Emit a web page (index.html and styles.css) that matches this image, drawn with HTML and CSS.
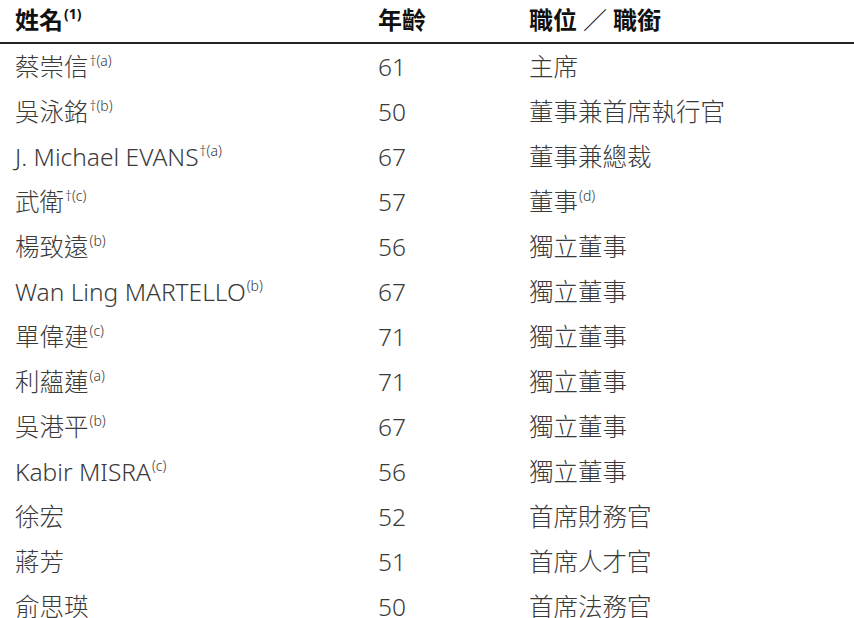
FILE: index.html
```html
<!DOCTYPE html>
<html lang="zh-Hant">
<head>
<meta charset="utf-8">
<link rel="stylesheet" href="styles.css">
</head>
<body>
<div class="table">
  <div class="row head">
    <div class="c name">姓名<sup class="hs">(1)</sup></div>
    <div class="c age">年齡</div>
    <div class="c pos">職位<span class="slash">／</span>職銜</div>
  </div>
  <div class="row"><div class="c name">蔡崇信<sup>†(a)</sup></div><div class="c age">61</div><div class="c pos">主席</div></div>
  <div class="row"><div class="c name">吳泳銘<sup>†(b)</sup></div><div class="c age">50</div><div class="c pos">董事兼首席執行官</div></div>
  <div class="row"><div class="c name">J. Michael EVANS<sup>†(a)</sup></div><div class="c age">67</div><div class="c pos">董事兼總裁</div></div>
  <div class="row"><div class="c name">武衛<sup>†(c)</sup></div><div class="c age">57</div><div class="c pos">董事<sup>(d)</sup></div></div>
  <div class="row"><div class="c name">楊致遠<sup>(b)</sup></div><div class="c age">56</div><div class="c pos">獨立董事</div></div>
  <div class="row"><div class="c name">Wan Ling MARTELLO<sup>(b)</sup></div><div class="c age">67</div><div class="c pos">獨立董事</div></div>
  <div class="row"><div class="c name">單偉建<sup>(c)</sup></div><div class="c age">71</div><div class="c pos">獨立董事</div></div>
  <div class="row"><div class="c name">利蘊蓮<sup>(a)</sup></div><div class="c age">71</div><div class="c pos">獨立董事</div></div>
  <div class="row"><div class="c name">吳港平<sup>(b)</sup></div><div class="c age">67</div><div class="c pos">獨立董事</div></div>
  <div class="row"><div class="c name">Kabir MISRA<sup>(c)</sup></div><div class="c age">56</div><div class="c pos">獨立董事</div></div>
  <div class="row"><div class="c name">徐宏</div><div class="c age">52</div><div class="c pos">首席財務官</div></div>
  <div class="row"><div class="c name">蔣芳</div><div class="c age">51</div><div class="c pos">首席人才官</div></div>
  <div class="row"><div class="c name">俞思瑛</div><div class="c age">50</div><div class="c pos">首席法務官</div></div>
</div>
</body>
</html>
```
FILE: styles.css
```css
html, body {
  margin: 0;
  padding: 0;
  background: #ffffff;
}
body {
  font-family: "Noto Sans", "Noto Sans CJK TC", sans-serif;
  color: #3a3a3a;
  width: 854px;
  height: 618px;
  overflow: hidden;
}
.table {
  display: flex;
  flex-direction: column;
}
.row {
  display: grid;
  grid-template-columns: 363px 151px 1fr;
  padding-left: 15px;
  height: 45px;
  align-items: center;
  font-size: 24.5px;
  font-weight: 300;
  line-height: 1;
}
.row:nth-child(2) {
  margin-top: 1px;
}
.row.head {
  border-bottom: 2px solid #222;
  font-weight: 700;
  color: #111;
  font-size: 24px;
  align-items: start;
  padding-top: 8px;
  box-sizing: border-box;
  height: 44px;
}
.slash {
  font-weight: 300;
  margin: 0 6px;
}
.c {
  white-space: nowrap;
}
sup {
  font-size: 14px;
  vertical-align: 10px;
  line-height: 0;
  margin-left: 1px;
}
sup.hs {
  font-weight: 700;
  font-size: 14px;
}
```
